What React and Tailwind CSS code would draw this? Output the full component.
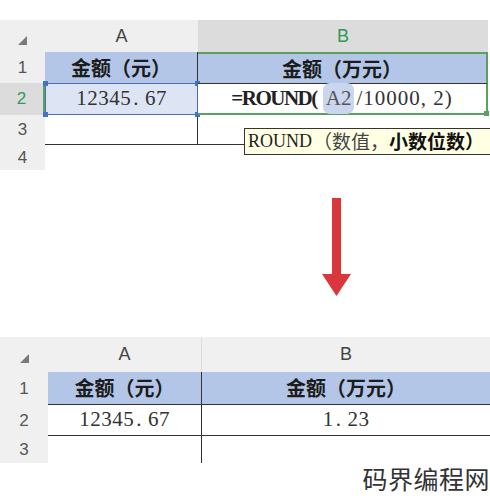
import React from "react";

const cjk = { fontFamily: '"Noto Sans CJK SC", "Noto Sans", sans-serif' };
const serif = { fontFamily: '"Liberation Serif", "Noto Sans CJK SC", serif' };
const sans = { fontFamily: '"Liberation Sans", Arial, sans-serif' };

const Corner = () => (
  <svg width="9" height="9" viewBox="0 0 9 9" className="mt-2">
    <polygon points="9,0 9,9 0,9" fill="#7a7a7a" />
  </svg>
);

const Handle = ({ className }) => (
  <span className={`absolute w-[5px] h-[5px] bg-[#4472c4] ${className}`} />
);

const TopSheet = () => (
  <div className="relative grid grid-cols-[45px_153px_290px] grid-rows-[32px_31px_32px_30px_25px]" style={sans}>
    {/* header row */}
    <div className="bg-[#efefef] flex items-center justify-center">
      <Corner />
    </div>
    <div className="bg-[#efefef] flex items-center justify-center text-[18px] text-[#444]">A</div>
    <div className="bg-[#dcdcdc] flex items-center justify-center text-[18px] text-[#2f9a5a]">B</div>

    {/* row 1 */}
    <div className="bg-[#efefef] flex items-center justify-center text-[17px] text-[#555]">1</div>
    <div className="bg-[#b4c6e7] flex items-center justify-center text-[20px] font-bold text-[#1c1c1c] border-r border-[#333]" style={cjk}>
      金额（元）
    </div>
    <div className="bg-[#b4c6e7] flex items-center justify-center text-[20px] font-bold text-[#1c1c1c] border-t-2 border-[#5aa05e] border-r-2 border-r-[#5aa05e]" style={cjk}>
      金额（万元）
    </div>

    {/* row 2 */}
    <div className="bg-[#dcdcdc] flex items-center justify-center text-[17px] text-[#2f9a5a] border-r-2 border-[#5aa05e]">2</div>
    <div className="relative bg-[#dde5f4] border-[1.5px] border-[#4a6fb8] flex items-center justify-center text-[21px] text-[#333] tracking-[0.5px]" style={serif}>
      <span>12345<span className="ml-[2px] mr-[6px]">.</span>67</span>
      <Handle className="-top-[3px] -left-[3px]" />
      <Handle className="-top-[3px] -right-[3px]" />
      <Handle className="-bottom-[3px] -left-[3px]" />
      <Handle className="-bottom-[3px] -right-[3px]" />
    </div>
    <div className="relative bg-white flex items-center justify-center border-t border-[#333] border-b-2 border-b-[#5aa05e] border-r-2 border-r-[#5aa05e] text-[21px] text-[#222]" style={serif}>
      <span className="font-bold tracking-[-1.5px]">=ROUND(</span>
      <span className="ml-[6px] px-[3px] rounded-[7px] bg-[#c9d6ee] text-[#555]">A2</span>
      <span className="ml-[2px] text-[#333] tracking-[1px]">/10000, 2)</span>
      <span className="absolute -right-[3px] -bottom-[3px] w-[5px] h-[5px] bg-[#5aa05e]" />
    </div>

    {/* row 3 */}
    <div className="bg-[#efefef] flex items-center justify-center text-[17px] text-[#555]">3</div>
    <div className="bg-white border-r border-[#333] border-b border-b-[#333]" />
    <div className="bg-white border-b border-[#333]" />

    {/* row 4 */}
    <div className="bg-[#efefef] flex items-center justify-center text-[17px] text-[#555]">4</div>
    <div className="bg-white" />
    <div className="bg-white" />

    {/* tooltip */}
    <div className="absolute left-[244px] top-[108px] h-[27px] w-[248px] bg-[#ffffe4] border border-[#333] flex items-center pl-[3px] text-[#222] whitespace-nowrap">
      <span style={serif} className="text-[18px]">ROUND</span>
      <span style={cjk} className="text-[19px] text-[#444] ml-[1px]">（数值，</span>
      <span style={cjk} className="text-[19px] font-bold text-[#111]">小数位数）</span>
    </div>
  </div>
);

const BottomSheet = () => (
  <div className="grid grid-cols-[48px_154px_288px] grid-rows-[35px_33px_31px_27px]" style={sans}>
    <div className="bg-[#f0f0f0] flex items-center justify-center">
      <Corner />
    </div>
    <div className="bg-[#f0f0f0] flex items-center justify-center text-[18px] text-[#444] border-r border-[#dcdcdc]">A</div>
    <div className="bg-[#f0f0f0] flex items-center justify-center text-[18px] text-[#444]">B</div>

    <div className="bg-[#f0f0f0] flex items-center justify-center text-[17px] text-[#555]">1</div>
    <div className="bg-[#b4c6e7] flex items-center justify-center text-[20px] font-bold text-[#1c1c1c] border-r border-[#333] border-b border-b-[#333]" style={cjk}>
      金额（元）
    </div>
    <div className="bg-[#b4c6e7] flex items-center justify-center text-[20px] font-bold text-[#1c1c1c] border-b border-[#333]" style={cjk}>
      金额（万元）
    </div>

    <div className="bg-[#f0f0f0] flex items-center justify-center text-[17px] text-[#555]">2</div>
    <div className="bg-white flex items-center justify-center text-[21px] text-[#333] tracking-[0.5px] border-r border-[#333] border-b border-b-[#333]" style={serif}>
      <span>12345<span className="ml-[2px] mr-[6px]">.</span>67</span>
    </div>
    <div className="bg-white flex items-center justify-center text-[21px] text-[#333] tracking-[0.5px] border-b border-[#333]" style={serif}>
      <span>1<span className="ml-[2px] mr-[6px]">.</span>23</span>
    </div>

    <div className="bg-[#f0f0f0] flex items-center justify-center text-[17px] text-[#555]">3</div>
    <div className="bg-white border-r border-[#333]" />
    <div className="bg-white" />
  </div>
);

export default function App() {
  return (
    <div className="w-[490px] h-[500px] bg-white overflow-hidden flex flex-col">
      <div className="h-[20px] shrink-0" />
      <TopSheet />
      <div className="h-[167px] shrink-0 flex justify-center pl-[184px]">
        <svg width="30" height="100" viewBox="0 0 30 100" className="mt-[28px]">
          <rect x="10" y="0" width="9" height="78" fill="#d9363e" />
          <polygon points="0,76 29,76 14.5,98" fill="#d9363e" />
        </svg>
      </div>
      <BottomSheet />
      <div className="flex justify-end mt-[3px]">
        <span className="text-[25px] text-[#333] leading-none tracking-[0.5px]" style={cjk}>码界编程网</span>
      </div>
    </div>
  );
}
